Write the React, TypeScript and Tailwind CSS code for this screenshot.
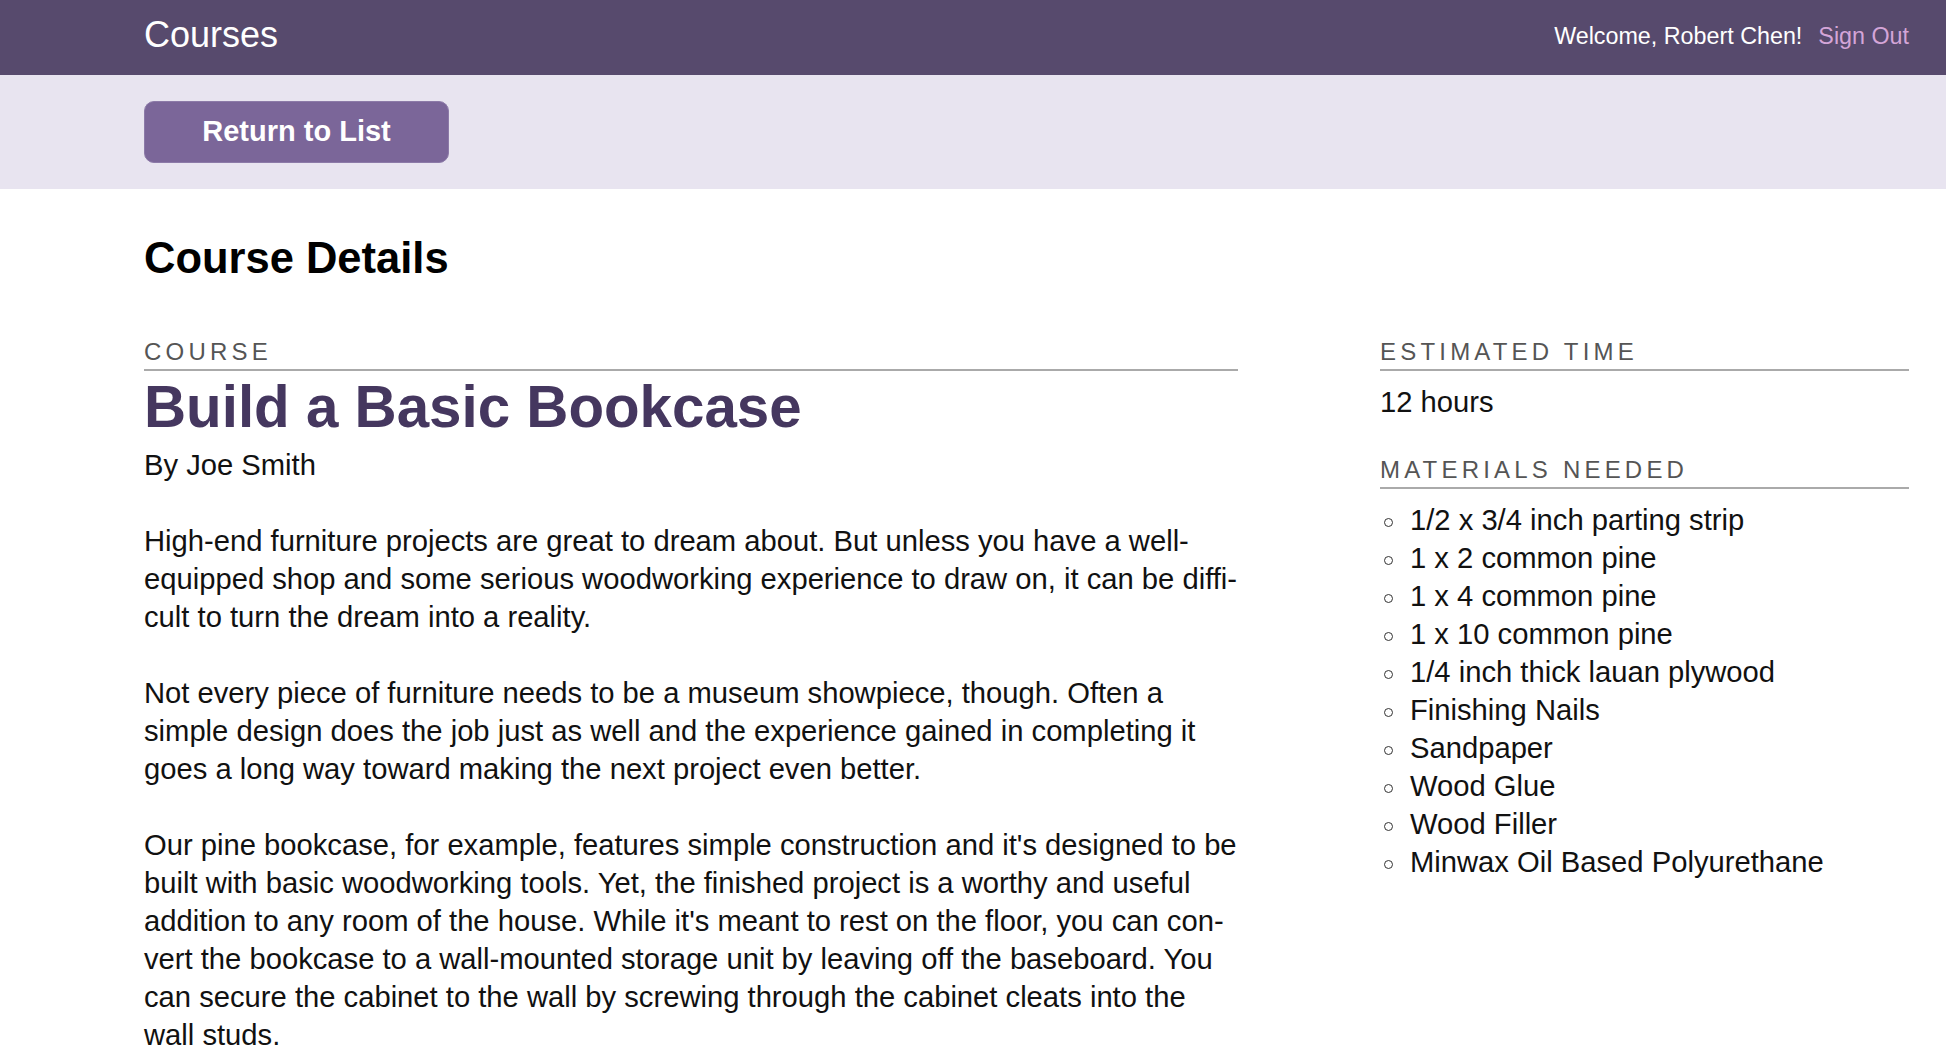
import React from "react";

const materials = [
  "1/2 x 3/4 inch parting strip",
  "1 x 2 common pine",
  "1 x 4 common pine",
  "1 x 10 common pine",
  "1/4 inch thick lauan plywood",
  "Finishing Nails",
  "Sandpaper",
  "Wood Glue",
  "Wood Filler",
  "Minwax Oil Based Polyurethane",
];

function SectionLabel({ children }: { children: React.ReactNode }) {
  return (
    <h3 className="border-b-2 border-[#aaaaaa] pb-[3px] text-[24px] leading-[28px] tracking-[4.2px] uppercase text-[#555555] font-normal">
      {children}
    </h3>
  );
}

export default function App() {
  return (
    <div className="min-h-screen bg-white font-['Liberation_Sans',Arial,sans-serif] text-[#111111]">
      <header className="h-[75px] bg-[#574a6d] flex items-center justify-between pl-[144px] pr-[37px]">
        <a className="text-[36px] text-white leading-none mb-[5px]">Courses</a>
        <div className="flex items-center gap-[16px] text-[23.3px] mb-[2px]">
          <span className="text-white">Welcome, Robert Chen!</span>
          <a className="text-[#d4a5d8]">Sign Out</a>
        </div>
      </header>

      <div className="h-[114px] bg-[#e8e4f0] flex items-center pl-[144px]">
        <button
          type="button"
          className="w-[305px] h-[62px] rounded-[10px] bg-[#7b6699] border border-[#8c7aa8] text-white font-bold text-[29px]"
        >
          Return to List
        </button>
      </div>

      <main className="pl-[144px] pr-[37px] pt-[43px] pb-[40px]">
        <h2 className="text-[43.5px] leading-[52px] font-bold text-black">Course Details</h2>

        <div className="flex mt-[54px]">
          <div className="w-[1096px] shrink-0">
            <div className="mr-[2px]">
              <SectionLabel>Course</SectionLabel>
            </div>
            <h1 className="text-[58.3px] leading-[64px] font-bold text-[#45375f] mt-[4px]">
              Build a Basic Bookcase
            </h1>
            <p className="text-[29.2px] leading-[38px] mt-[7px]">By Joe Smith</p>

            <div className="text-[29.2px] leading-[38px] mt-[38px] space-y-[38px]">
              <p>
                High-end furniture projects are great to dream about. But unless you have a
                well-equipped shop and some serious woodworking experience to draw on, it can be
                diffi{"\u00AD"}cult to turn the dream into a reality.
              </p>
              <p>
                Not every piece of furniture needs to be a museum showpiece, though. Often a simple
                design does the job just as well and the experience gained in completing it goes a
                long way toward making the next project even better.
              </p>
              <p>
                Our pine bookcase, for example, features simple construction and it's designed to
                be built with basic woodworking tools. Yet, the finished project is a worthy and
                useful addition to any room of the house. While it's meant to rest on the floor, you
                can con{"\u00AD"}vert the bookcase to a wall-mounted storage unit by leaving off the
                baseboard. You can secure the cabinet to the wall by screwing through the cabinet
                cleats into the wall studs.
              </p>
            </div>
          </div>

          <aside className="ml-[140px] flex-1">
            <SectionLabel>Estimated Time</SectionLabel>
            <p className="text-[29.2px] leading-[38px] mt-[12px]">12 hours</p>

            <div className="mt-[35px]">
              <SectionLabel>Materials Needed</SectionLabel>
              <ul className="mt-[12px] text-[29.2px] leading-[38px]">
                {materials.map((m) => (
                  <li key={m} className="flex items-start">
                    <span className="mt-[17px] ml-[4px] mr-[17px] w-[9px] h-[9px] shrink-0 rounded-full border-[1.5px] border-[#333333]" />
                    <span>{m}</span>
                  </li>
                ))}
              </ul>
            </div>
          </aside>
        </div>
      </main>
    </div>
  );
}
